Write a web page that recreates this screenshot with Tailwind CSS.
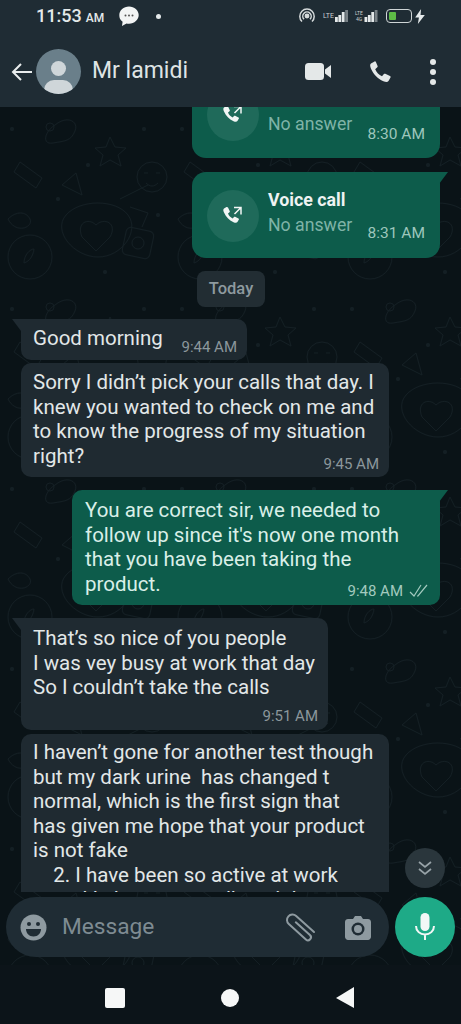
<!DOCTYPE html>
<html lang="en">
<head>
  <meta charset="UTF-8" />
  <meta name="viewport" content="width=device-width, initial-scale=1.0"/>
  <title>Mr lamidi</title>
  <script src="https://cdn.jsdelivr.net/npm/@tailwindcss/browser@4"></script>
</head>
<body class="bg-[#0a1317] font-['Roboto',sans-serif]">
  <div class="w-[461px] h-[1024px] flex flex-col overflow-hidden relative">

    <!-- status bar + header -->
    <header class="h-[107px] shrink-0 bg-[#1f2c34] text-[#e4e9ea]">
      <div class="h-[32px] flex items-center pl-[36px] pr-[36px]">
        <span class="text-[18px] font-medium leading-none">11:53</span>
        <span class="text-[12px] font-medium ml-[4px] mt-[3px]">AM</span>
        <svg class="ml-[14px]" width="22" height="22" viewBox="0 0 22 22"><path d="M11 1.500c5.400 0 9.700 3.800 9.700 8.600s-4.300 8.600-9.700 8.600c-.9 0-1.700-.1-2.500-.3L4 21l.6-4.200c-2.600-1.600-3.300-4-3.300-6.700 0-4.800 4.300-8.600 9.700-8.600z" fill="#f2f4f4"/><circle cx="7.500" cy="10.500" r="1" fill="#555"/><circle cx="11" cy="10.500" r="1" fill="#555"/><circle cx="14.500" cy="10.500" r="1" fill="#555"/></svg>
        <span class="w-[5px] h-[5px] rounded-full bg-[#e4e9ea] ml-[16px]"></span>
        <div class="ml-auto flex items-center">
          <svg width="18" height="18" viewBox="0 0 18 18" fill="none" stroke="#d5dadb" stroke-width="1.500"><path d="M4 14.500a7.200 7.200 0 1 1 10 0"/><path d="M6 12.200a4.200 4.200 0 1 1 6 0"/><circle cx="9" cy="9" r="1.700" fill="#d5dadb"/></svg>
          <span class="ml-[7px] w-[12px] text-[7px] leading-none text-[#c9cfd0]">LTE</span>
          <svg width="13" height="12" viewBox="0 0 13 12" fill="#e4e9ea"><rect x="0" y="7" width="2.800" height="5"/><rect x="3.400" y="5" width="2.800" height="7"/><rect x="6.800" y="2" width="2.800" height="10"/><rect x="10.200" y="0" width="2.800" height="12" opacity=".45"/></svg>
          <span class="ml-[7px] w-[8px] text-[5px] leading-[6px] text-center text-[#c9cfd0]">LTE 4G</span>
          <svg class="ml-[1px]" width="14" height="12" viewBox="0 0 13 12" fill="#e4e9ea"><rect x="0" y="7" width="2.800" height="5"/><rect x="3.400" y="5" width="2.800" height="7"/><rect x="6.800" y="2" width="2.800" height="10"/><rect x="10.200" y="0" width="2.800" height="12" opacity=".45"/></svg>
          <div class="ml-[8px] w-[26px] h-[14px] rounded-[4px] border border-[#cfd5d6] p-[2px] flex">
            <span class="w-[7px] bg-[#5dbb46] rounded-[1px]"></span>
          </div>
          <svg class="ml-[3px]" width="10" height="15" viewBox="0 0 9 14" fill="#e4e9ea"><path d="M5.500 0 0 8h3.500L2.500 14 9 5.500H5z"/></svg>
        </div>
      </div>
      <div class="h-[75px] flex items-center pl-[10px] pt-[4px]">
        <svg width="24" height="24" viewBox="0 0 24 24" fill="none" stroke="#e9eded" stroke-width="2"><path d="M22 12H3M11 4l-8 8 8 8"/></svg>
        <div class="w-[45px] h-[45px] rounded-full bg-[#6a7f8a] ml-[2px] overflow-hidden relative">
          <span class="absolute left-[15px] top-[12px] w-[15px] h-[15px] rounded-full bg-[#cfd6d9]"></span>
          <span class="absolute left-[8px] top-[31px] w-[29px] h-[20px] rounded-full bg-[#cfd6d9]"></span>
        </div>
        <span class="ml-[11px] text-[23px] text-[#dfe4e5]">Mr lamidi</span>
        <svg class="ml-auto" width="28" height="20" viewBox="0 0 28 20" fill="#e4e8e8"><rect x="1" y="1" width="19" height="17" rx="3.500"/><path d="M21 7.500 27 3v13l-6-4.500z"/></svg>
        <svg class="ml-[36px]" width="24" height="24" viewBox="0 0 24 24" fill="#e4e8e8"><path d="M6.600 1.500 3 3.600C1.800 4.500 2 6.400 3 8.700c3 6.300 6.500 9.800 12.400 12.600 2.400 1 4.200 1 5.100-.2l2-3.500c.3-.6.100-1.200-.5-1.500l-4.700-2.300c-.5-.2-1-.1-1.400.3l-1.900 2.100c-3.100-1.400-5.400-3.800-6.800-7l2.100-1.900c.4-.4.500-.9.300-1.400L7.900 1.900c-.3-.5-.8-.7-1.300-.4z"/></svg>
        <div class="ml-[38px] mr-[25px] flex flex-col gap-[4px]">
          <span class="w-[6px] h-[6px] rounded-full bg-[#e4e8e8]"></span>
          <span class="w-[6px] h-[6px] rounded-full bg-[#e4e8e8]"></span>
          <span class="w-[6px] h-[6px] rounded-full bg-[#e4e8e8]"></span>
        </div>
      </div>
    </header>

    <!-- chat -->
    <main class="flex-1 relative overflow-hidden">
      <!-- wallpaper doodles -->
      <svg class="absolute inset-0" width="461" height="860">
        <defs>
          <pattern id="doodle" width="170" height="180" patternUnits="userSpaceOnUse">
            <g fill="none" stroke="#141f24" stroke-width="1">
              <circle cx="30" cy="150" r="22"/><path d="M24 156c0-8 6-14 10-14-1 7-4 12-10 14z"/>
              <path d="M55 18c12-10 24-4 20 6s-10 10-22 12-8-12 2-18z"/><circle cx="50" cy="20" r="4"/>
              <path d="M110 30l5 10 11 1-8 7 3 11-11-6-10 6 3-11-8-7 11-1z"/>
              <path d="M20 55l22 16-6 10-22-16zM62 78l14-12 6 22z"/>
              <path d="M82 130c-6-14 6-20 14-12 8-8 22-2 14 12l-14 14z"/>
              <path d="M66 108c14-16 50-16 62 0s-6 42-30 42-46-26-32-42z"/>
              <rect x="124" y="122" width="28" height="28" rx="5" transform="rotate(12 138 136)"/><circle cx="138" cy="136" r="6"/>
              <circle cx="152" cy="70" r="15"/><path d="M144 66h4M156 66h4M146 76c4 4 8 4 12 0"/>
              <path d="M120 92l28-14M130 100l18 6-6 14"/><path d="M8 112c8-8 18-8 22 0s-14 16-22 0z"/>
            </g>
            <g fill="#141f24">
              <circle cx="12" cy="22" r="2"/><circle cx="88" cy="58" r="2"/><circle cx="58" cy="92" r="2"/><circle cx="144" cy="22" r="2"/><circle cx="105" cy="165" r="2"/><circle cx="158" cy="108" r="2"/>
            </g>
          </pattern>
        </defs>
        <rect width="461" height="860" fill="url(#doodle)"/>
      </svg>

      <div class="relative flex flex-col h-[785px] overflow-hidden">
        <!-- outgoing calls -->
        <div class="ml-[192px] w-[248px] h-[51px] shrink-0 bg-[#0d5c4b] rounded-b-[14px] relative">
          <span class="absolute left-[15px] -top-[18px] w-[52px] h-[52px] rounded-full bg-[#1f6a5a] flex items-center justify-center">
            <svg width="22" height="22" viewBox="0 0 22 22" fill="#f2f6f5"><path d="M4.500 2 2 3.500c-1 .8-.8 2.300 0 4 2.200 4.700 5 7.500 9.500 9.700 1.800.8 3.200.8 3.900-.2l1.500-2.500c.2-.4 0-.8-.4-1l-3.400-1.700c-.4-.2-.8 0-1.100.3l-1.300 1.500C8.500 12.500 7 11 6 8.600l1.500-1.300c.3-.3.400-.7.300-1.100L6 2.500c-.3-.5-1-.8-1.500-.5z"/><path d="M12 2.500h7v7M19 2.500l-6.500 6.500" fill="none" stroke="#f2f6f5" stroke-width="1.500"/></svg>
          </span>
          <span class="absolute left-[76px] top-[5px] text-[17.700px] leading-[24px] text-[#7fb3a7]">No answer</span>
          <span class="absolute right-[15px] top-[17px] text-[15.500px] leading-[20px] text-[#9dc6bc]">8:30 AM</span>
        </div>
        <div class="ml-[192px] mt-[14px] w-[256px] h-[86px] shrink-0 relative">
          <div class="absolute left-0 top-0 w-[248px] h-[86px] bg-[#0d5c4b] rounded-[14px] rounded-tr-none"></div>
          <svg class="absolute left-[247px] top-0" width="9" height="12" viewBox="0 0 9 12" fill="#0d5c4b"><path d="M0 0h9L0 12z"/></svg>
          <span class="absolute left-[15px] top-[18px] w-[52px] h-[52px] rounded-full bg-[#1f6a5a] flex items-center justify-center">
            <svg width="22" height="22" viewBox="0 0 22 22" fill="#f2f6f5"><path d="M4.500 2 2 3.500c-1 .8-.8 2.300 0 4 2.200 4.700 5 7.500 9.500 9.700 1.800.8 3.200.8 3.900-.2l1.500-2.500c.2-.4 0-.8-.4-1l-3.400-1.700c-.4-.2-.8 0-1.100.3l-1.300 1.500C8.500 12.500 7 11 6 8.600l1.500-1.300c.3-.3.400-.7.300-1.100L6 2.500c-.3-.5-1-.8-1.500-.5z"/><path d="M12 2.500h7v7M19 2.500l-6.500 6.500" fill="none" stroke="#f2f6f5" stroke-width="1.500"/></svg>
          </span>
          <span class="absolute left-[76px] top-[16px] text-[17.800px] font-bold leading-[24px] text-[#eef3f2]">Voice call</span>
          <span class="absolute left-[76px] top-[41px] text-[17.700px] leading-[24px] text-[#7fb3a7]">No answer</span>
          <span class="absolute right-[23px] top-[51px] text-[15.500px] leading-[20px] text-[#9dc6bc]">8:31 AM</span>
        </div>

        <div class="ml-[197px] mt-[13px] w-[68px] h-[36px] shrink-0 rounded-[8px] bg-[#222d33] flex items-center justify-center pt-px text-[16.500px] font-medium text-[#8e9a9f]">Today</div>

        <!-- Good morning -->
        <div class="ml-[21px] mt-[12px] w-[226px] h-[41px] shrink-0 rounded-[10px] rounded-tl-none bg-[#1f2a31] relative">
          <svg class="absolute -left-[9px] top-0" width="9" height="12" viewBox="0 0 9 12" fill="#1f2a31"><path d="M9 0H0l9 12z"/></svg>
          <p class="absolute left-[12px] top-[7px] text-[20.500px] leading-[24.500px] text-[#e2e7e8]">Good morning</p>
          <span class="absolute right-[10px] top-[18px] text-[15px] leading-[20px] text-[#8c979c]">9:44 AM</span>
        </div>

        <!-- Sorry -->
        <div class="ml-[21px] mt-[3px] w-[368px] h-[114px] shrink-0 rounded-[10px] bg-[#1f2a31] pl-[12px] pt-[7px] relative">
          <p class="w-fit text-[20.500px] leading-[24.500px] text-[#e2e7e8] whitespace-pre">Sorry I didn’t pick your calls that day. I
knew you wanted to check on me and
to know the progress of my situation
right?</p>
          <span class="absolute right-[10px] bottom-[3px] text-[15px] leading-[20px] text-[#8c979c]">9:45 AM</span>
        </div>

        <!-- You are correct -->
        <div class="ml-[72px] mt-[13px] w-[376px] h-[115px] shrink-0 relative">
          <div class="absolute left-0 top-0 w-[368px] h-[115px] rounded-[10px] rounded-tr-none bg-[#0d5c4b]"></div>
          <svg class="absolute left-[367px] top-0" width="9" height="12" viewBox="0 0 9 12" fill="#0d5c4b"><path d="M0 0h9L0 12z"/></svg>
          <p class="absolute left-[13px] top-[8px] text-[20.500px] leading-[24.500px] text-[#d9efe8] whitespace-pre">You are correct sir, we needed to
follow up since it's now one month
that you have been taking the
product.</p>
          <span class="absolute right-[45px] bottom-[4px] text-[15px] leading-[20px] text-[#a3cabf]">9:48 AM</span>
          <svg class="absolute right-[17px] bottom-[7px]" width="22" height="14" viewBox="0 0 22 14" fill="none" stroke="#a3cabf" stroke-width="1.200"><path d="M1 8l4 4 7-11M8 12l1 0 9-11"/></svg>
        </div>

        <!-- That's so nice -->
        <div class="ml-[21px] mt-[13px] w-[307px] h-[112px] shrink-0 rounded-[10px] rounded-tl-none bg-[#1f2a31] pl-[12px] pt-[8px] relative">
          <svg class="absolute -left-[9px] top-0" width="9" height="12" viewBox="0 0 9 12" fill="#1f2a31"><path d="M9 0H0l9 12z"/></svg>
          <p class="w-fit text-[20.500px] leading-[24.500px] text-[#e2e7e8] whitespace-pre">That’s so nice of you people
I was vey busy at work that day
So I couldn’t take the calls</p>
          <span class="absolute right-[10px] bottom-[4px] text-[15px] leading-[20px] text-[#8c979c]">9:51 AM</span>
        </div>

        <!-- I haven't -->
        <div class="ml-[21px] mt-[4px] w-[368px] h-[158px] shrink-0 overflow-hidden rounded-t-[10px] bg-[#1f2a31] pl-[12px] pt-[6px]">
          <p class="w-fit text-[20.500px] leading-[24.500px] text-[#e2e7e8] whitespace-pre">I haven’t gone for another test though
but my dark urine  has changed t
normal, which is the first sign that
has given me hope that your product
is not fake
    2. I have been so active at work
    and I sleep very well at night</p>
        </div>
      </div>

      <!-- scroll to bottom -->
      <div class="absolute left-[405px] top-[741px] w-[40px] h-[40px] rounded-full bg-[#2a363c] flex items-center justify-center">
        <svg width="18" height="18" viewBox="0 0 18 18" fill="none" stroke="#98a3a8" stroke-width="1.700"><path d="M3 3l6 5 6-5M3 10l6 5 6-5"/></svg>
      </div>

      <!-- composer -->
      <div class="absolute left-0 right-0 top-[790px] flex items-center pl-[6px]">
        <div class="w-[383px] h-[60px] rounded-full bg-[#1f2c34] flex items-center pl-[14px]">
          <svg width="27" height="27" viewBox="0 0 27 27"><circle cx="13.500" cy="13.500" r="13" fill="#8e9aa0"/><circle cx="9" cy="10" r="2" fill="#1f2c34"/><circle cx="18" cy="10" r="2" fill="#1f2c34"/><path d="M6 15h15c0 4-3 7.500-7.500 7.500S6 19 6 15z" fill="#1f2c34"/></svg>
          <span class="ml-[15px] mt-px text-[22.700px] text-[#7e8b92]">Message</span>
          <svg class="ml-auto overflow-visible" width="30" height="30" viewBox="0 0 30 30" fill="none" stroke="#8e9aa0" stroke-width="2" stroke-linecap="round"><path transform="rotate(42 15 15)" d="M8 15h19a3 3 0 0 1 0 6H4a5 5 0 0 1 0-11h24"/></svg>
          <svg class="ml-[29px] mr-[18px]" width="26" height="25" viewBox="0 0 26 25"><path d="M3 4h5l2-3h6l2 3h5c1.500 0 3 1 3 3v15c0 1.500-1.500 3-3 3H3c-1.500 0-3-1.500-3-3V7c0-2 1.500-3 3-3z" fill="#8e9aa0"/><circle cx="13" cy="14" r="6.500" fill="#1f2c34"/><circle cx="13" cy="14" r="4" fill="#8e9aa0"/></svg>
        </div>
        <div class="ml-[6px] w-[60px] h-[60px] rounded-full bg-[#1eaa87] flex items-center justify-center">
          <svg width="22" height="30" viewBox="0 0 22 30" fill="none"><rect x="6.500" y="1" width="9" height="18" rx="4.500" fill="#f2f7f6"/><path d="M2 14c0 5 4 8.500 9 8.500s9-3.500 9-8.500M11 22v6" stroke="#f2f7f6" stroke-width="2"/></svg>
        </div>
      </div>
    </main>

    <!-- nav bar -->
    <footer class="h-[59px] shrink-0 bg-[#0c1419] flex items-start pt-[4px]">
      <span class="ml-[105px] mt-[19px] w-[20px] h-[20px] rounded-[2px] bg-[#f6f7f7]"></span>
      <span class="ml-[96px] mt-[20px] w-[18px] h-[18px] rounded-full bg-[#f6f7f7]"></span>
      <svg class="ml-[96px] mt-[18px]" width="20" height="22" viewBox="0 0 20 22" fill="#f6f7f7"><path d="M19 0v21L1 11z"/></svg>
    </footer>
  </div>
</body>
</html>
